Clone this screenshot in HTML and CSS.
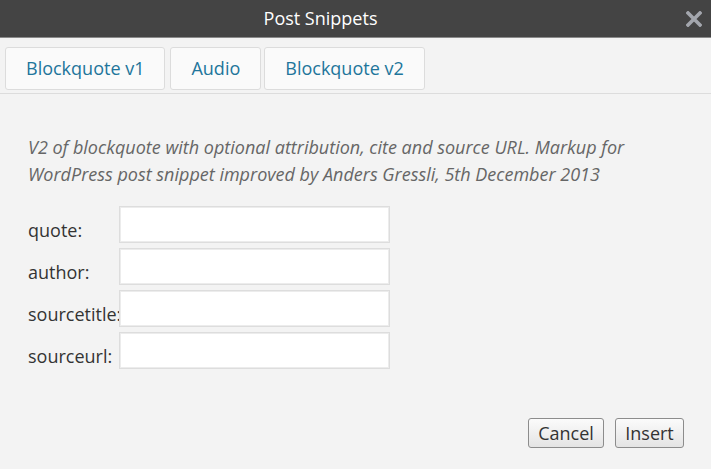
FILE: index.html
```html
<!DOCTYPE html>
<html>
<head>
<meta charset="utf-8">
<link rel="stylesheet" href="styles.css">
</head>
<body>
<div class="dialog">
  <div class="titlebar">
    <span class="title">Post Snippets</span>
    <span class="close"><svg width="16" height="16" viewBox="0 0 16 16"><path d="M2 2 L14 14 M14 2 L2 14" stroke="#a3a6ad" stroke-width="3.6" stroke-linecap="square"/></svg></span>
  </div>
  <div class="tabs">
    <div class="tab">Blockquote v1</div>
    <div class="tab">Audio</div>
    <div class="tab">Blockquote v2</div>
  </div>
  <div class="content">
    <p class="desc">V2 of blockquote with optional attribution, cite and source URL. Markup for WordPress post snippet improved by Anders Gressli, 5th December 2013</p>
    <div class="form">
      <div class="row"><label class="lbl">quote:</label><input class="field" type="text"></div>
      <div class="row"><label class="lbl">author:</label><input class="field" type="text"></div>
      <div class="row"><label class="lbl">sourcetitle:</label><input class="field" type="text"></div>
      <div class="row"><label class="lbl">sourceurl:</label><input class="field" type="text"></div>
    </div>
  </div>
  <div class="actions">
    <button class="btn btn-cancel">Cancel</button>
    <button class="btn btn-insert">Insert</button>
  </div>
</div>
</body>
</html>
```
FILE: styles.css
```css
html, body {
  margin: 0;
  padding: 0;
  height: 100%;
}
body {
  background: #f3f3f3;
  font-family: "Open Sans", "Liberation Sans", sans-serif;
  font-size: 18px;
  color: #333;
}
.dialog {
  display: flex;
  flex-direction: column;
  height: 469px;
}
.titlebar {
  position: relative;
  height: 37px;
  background: #444;
  border-bottom: 1px solid #8a8a8a;
  display: flex;
  align-items: center;
  justify-content: center;
  padding-right: 70px;
  box-sizing: content-box;
}
.title {
  color: #fff;
  font-size: 18px;
  line-height: 37px;
}
.close {
  position: absolute;
  right: 9px;
  top: 11px;
  width: 16px;
  height: 16px;
  display: block;
}
.close svg { display: block; }
.tabs {
  display: flex;
  gap: 5px;
  padding: 9px 4px 3px 5px;
  border-bottom: 1px solid #dcdcdc;
}
.tab {
  height: 43px;
  box-sizing: border-box;
  border: 1px solid #dcdcdc;
  border-radius: 3px;
  background: #fafafa;
  color: #21759b;
  font-size: 18px;
  line-height: 41px;
  padding: 0 20px;
}
.tab + .tab + .tab { margin-left: -2px; }
.content {
  padding: 40px 28px 0;
  flex: 1;
}
.desc {
  margin: 0 0 18px;
  font-style: italic;
  color: #666;
  font-size: 18px;
  line-height: 27px;
}
.form {
  display: flex;
  flex-direction: column;
  gap: 5px;
}
.row {
  display: flex;
  align-items: flex-end;
}
.lbl {
  width: 91px;
  flex: none;
  white-space: nowrap;
  font-size: 18px;
  line-height: 20px;
  padding-bottom: 3px;
  color: #333;
}
.field {
  position: relative;
  width: 271px;
  height: 37px;
  box-sizing: border-box;
  margin: 0;
  border: 1px solid #dddddd;
  box-shadow: inset 0 0 0 1px #ececec;
  background: #fff;
  font-family: inherit;
  font-size: 16px;
  padding: 0 4px;
  outline: none;
}
.actions {
  display: flex;
  justify-content: flex-end;
  gap: 11px;
  padding: 0 27px 21px;
}
.btn {
  height: 30px;
  box-sizing: border-box;
  border: 1px solid #8c8c8c;
  border-radius: 3px;
  background: linear-gradient(#fbfbfb, #e4e4e4);
  font-family: inherit;
  font-size: 18px;
  color: #333;
  line-height: 26px;
  padding: 0 9px;
  margin: 0;
}
.btn-cancel { width: 76px; }
.btn-insert { width: 69px; }
```
